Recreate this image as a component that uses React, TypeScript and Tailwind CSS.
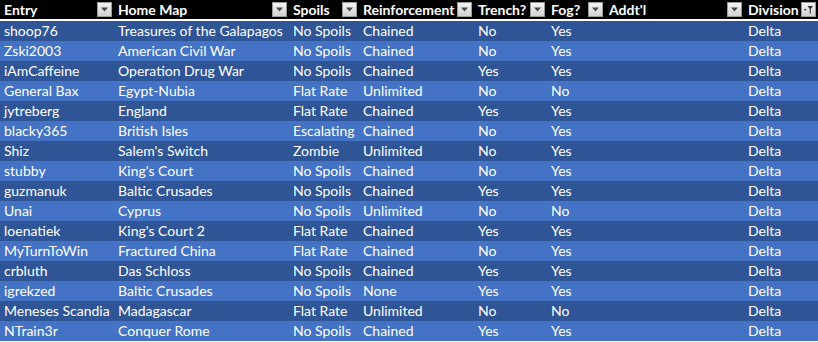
import React from "react";

const columns = [
  { label: "Entry", w: "w-[114px]" },
  { label: "Home Map", w: "w-[175px]" },
  { label: "Spoils", w: "w-[70px]" },
  { label: "Reinforcement", w: "w-[115px]" },
  { label: "Trench?", w: "w-[73px]" },
  { label: "Fog?", w: "w-[58px]" },
  { label: "Addt'l", w: "w-[139px]" },
  { label: "Division", w: "w-[74px]" },
];

const rows = [
  ["shoop76", "Treasures of the Galapagos", "No Spoils", "Chained", "No", "Yes", "", "Delta"],
  ["Zski2003", "American Civil War", "No Spoils", "Chained", "No", "Yes", "", "Delta"],
  ["iAmCaffeine", "Operation Drug War", "No Spoils", "Chained", "Yes", "Yes", "", "Delta"],
  ["General Bax", "Egypt-Nubia", "Flat Rate", "Unlimited", "No", "No", "", "Delta"],
  ["jytreberg", "England", "Flat Rate", "Chained", "Yes", "Yes", "", "Delta"],
  ["blacky365", "British Isles", "Escalating", "Chained", "No", "Yes", "", "Delta"],
  ["Shiz", "Salem's Switch", "Zombie", "Unlimited", "No", "Yes", "", "Delta"],
  ["stubby", "King's Court", "No Spoils", "Chained", "No", "Yes", "", "Delta"],
  ["guzmanuk", "Baltic Crusades", "No Spoils", "Chained", "Yes", "Yes", "", "Delta"],
  ["Unai", "Cyprus", "No Spoils", "Unlimited", "No", "No", "", "Delta"],
  ["loenatiek", "King's Court 2", "Flat Rate", "Chained", "Yes", "Yes", "", "Delta"],
  ["MyTurnToWin", "Fractured China", "Flat Rate", "Chained", "No", "Yes", "", "Delta"],
  ["crbluth", "Das Schloss", "No Spoils", "Chained", "Yes", "Yes", "", "Delta"],
  ["igrekzed", "Baltic Crusades", "No Spoils", "None", "Yes", "Yes", "", "Delta"],
  ["Meneses Scandia", "Madagascar", "Flat Rate", "Unlimited", "No", "No", "", "Delta"],
  ["NTrain3r", "Conquer Rome", "No Spoils", "Chained", "Yes", "Yes", "", "Delta"],
];

const FilterButton: React.FC<{ filtered?: boolean }> = ({ filtered }) => (
  <div className="shrink-0 w-[15px] h-[15px] border border-[#9a9a9a] bg-gradient-to-b from-[#f4f4f4] to-[#d2d2d2] flex items-center justify-center">
    {filtered ? (
      <svg width="11" height="11" viewBox="0 0 11 11">
        <path d="M4.5 2 L10 2 L7.8 5 L7.8 9.5 L6.7 9.5 L6.7 5 Z" fill="#333" />
        <path d="M0.8 5 L3.6 5 L2.2 7 Z" fill="#333" />
      </svg>
    ) : (
      <svg width="9" height="5" viewBox="0 0 9 5">
        <path d="M1 0.5 L8 0.5 L4.5 4.5 Z" fill="#4a4a4a" />
      </svg>
    )}
  </div>
);

export default function App() {
  return (
    <div
      className="w-[818px] h-[342px] bg-white overflow-hidden text-[14px] leading-none"
      style={{ fontFamily: "Lato, 'Open Sans', sans-serif" }}
    >
      {/* Header */}
      <div className="flex h-[19px] bg-black mb-[2px]">
        {columns.map((c, i) => (
          <div key={c.label} className={`${c.w} flex items-center justify-between pl-[4px] pr-[2px] text-white font-bold whitespace-nowrap`}>
            <span>{c.label}</span>
            <FilterButton filtered={i === columns.length - 1} />
          </div>
        ))}
      </div>

      {/* Rows */}
      {rows.map((r, ri) => (
        <div key={ri} className={`flex h-[20px] ${ri % 2 === 0 ? "bg-[#2f5597]" : "bg-[#4472c4]"}`}>
          {r.map((cell, ci) => (
            <div key={ci} className={`${columns[ci].w} flex items-center pl-[4px] text-white whitespace-nowrap`}>
              {cell}
            </div>
          ))}
        </div>
      ))}
    </div>
  );
}
